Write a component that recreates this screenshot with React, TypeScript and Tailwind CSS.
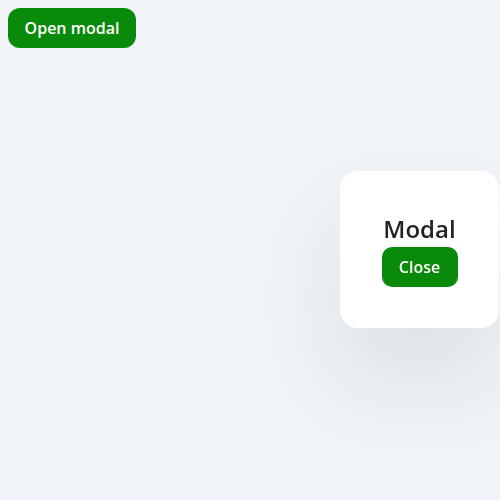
export default function App() {
  return (
    <div className="min-h-[500px] w-full bg-[#f0f4f8] p-2 font-['Open_Sans',sans-serif]">
      <button className="h-10 w-[128px] rounded-xl bg-[#0a8a0a] text-[16px] font-semibold text-white">
        Open modal
      </button>

      <div className="fixed left-[340px] top-[171px] flex h-[157px] w-[159px] flex-col items-center justify-center rounded-[18px] bg-white pt-[2px] shadow-[0_50px_90px_rgba(30,41,59,0.09)]">
        <h2 className="text-[24px] font-semibold leading-7 text-[#212529]">Modal</h2>
        <button className="mt-1 h-10 w-[76px] rounded-[10px] bg-[#0a8a0a] text-[16px] font-semibold text-white">
          Close
        </button>
      </div>
    </div>
  );
}
